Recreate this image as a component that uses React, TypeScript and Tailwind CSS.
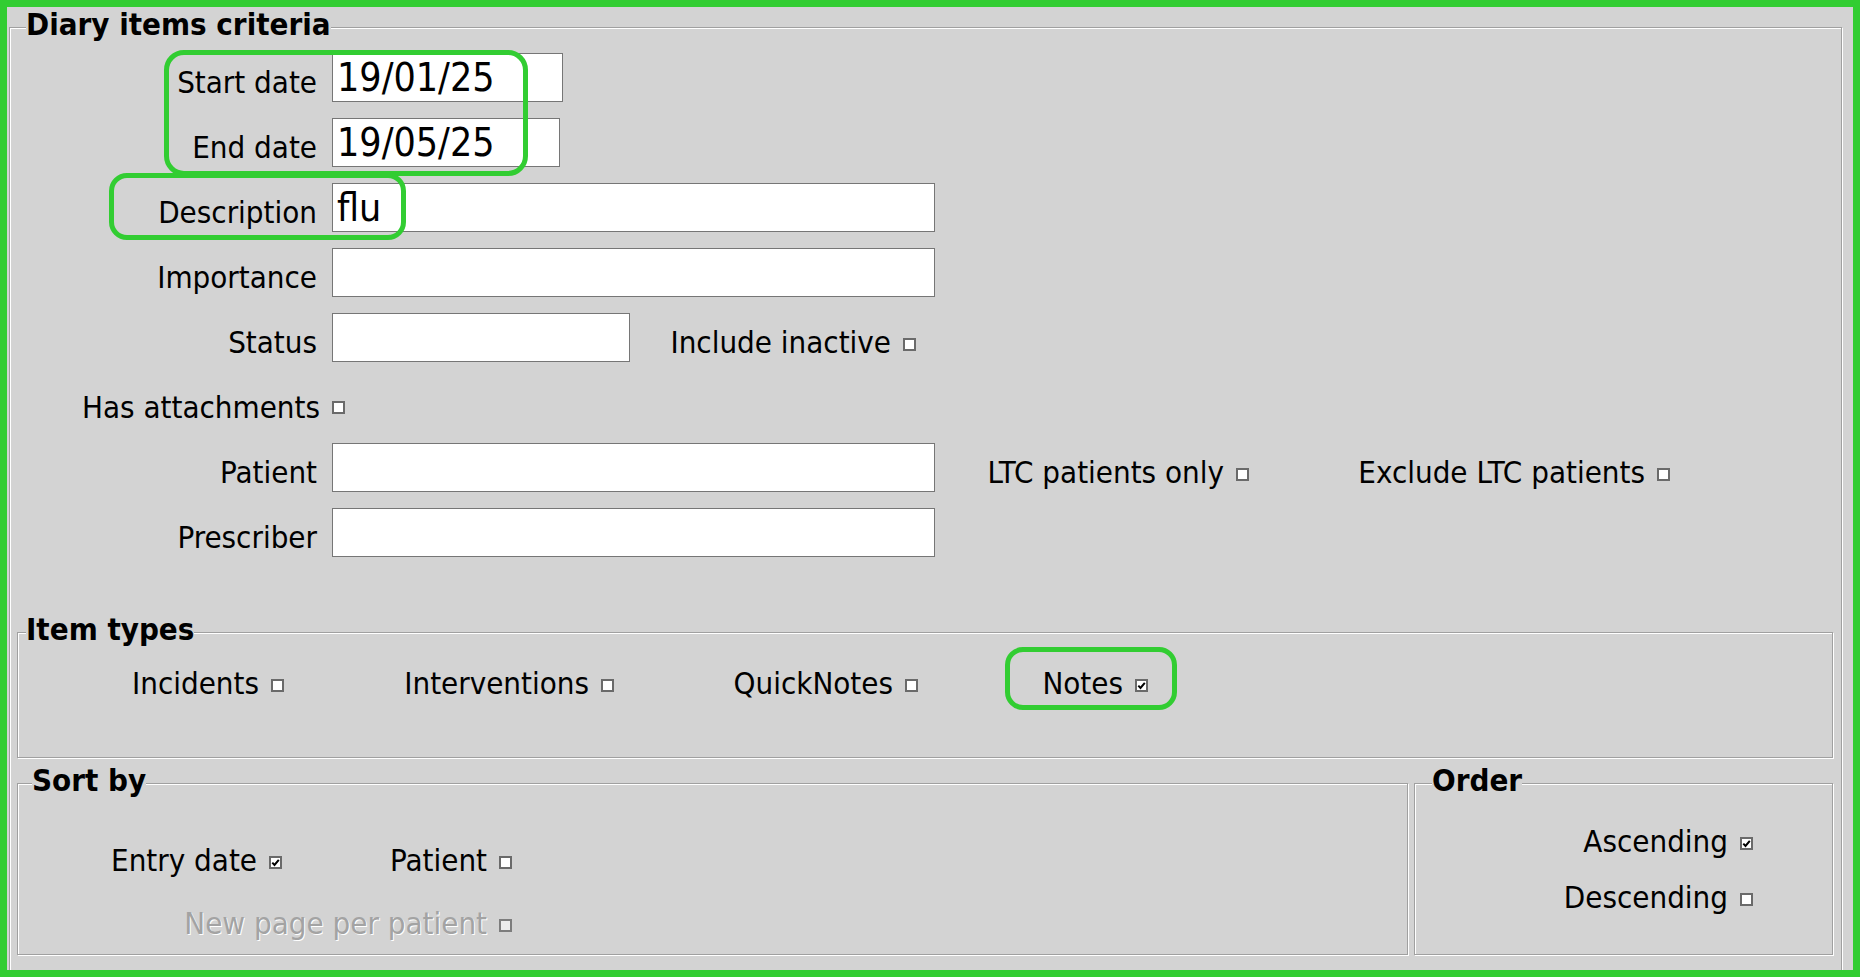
import React from 'react';

function Box({ checked = false, disabled = false, className = '' }: { checked?: boolean; disabled?: boolean; className?: string }) {
  return (
    <span
      className={`flex h-[13px] w-[13px] shrink-0 items-center justify-center border-2 ${
        disabled ? 'border-[#7d7d7d] bg-[#ebebeb]' : 'border-[#6a6a6a] bg-white'
      } ${className}`}
    >
      {checked && (
        <svg viewBox="0 0 9 9" className="h-[9px] w-[9px]">
          <path d="M1.3 4.6 L3.5 6.9 L7.8 1.8" fill="none" stroke="#000" strokeWidth="2" />
        </svg>
      )}
    </span>
  );
}

function Check({ label, checked = false, disabled = false, className = '' }: { label: string; checked?: boolean; disabled?: boolean; className?: string }) {
  return (
    <div className={`flex shrink-0 items-center justify-end gap-[12px] ${className}`}>
      <span className={`text-[31px] leading-[36px] whitespace-nowrap ${disabled ? 'text-[#a3a3a3] [text-shadow:1px_1px_0_#fff]' : ''}`}>
        {label}
      </span>
      <Box checked={checked} disabled={disabled} className="mt-[4px]" />
    </div>
  );
}

function Field({ label, value = '', w, children }: { label: string; value?: string; w: string; children?: React.ReactNode }) {
  return (
    <div className="flex h-[49px] items-end">
      <span className="w-[300px] shrink-0 pb-[4px] text-right text-[31px] leading-none">{label}</span>
      <div className={`ml-[15px] h-[49px] shrink-0 border border-[#767676] bg-white pl-[4px] text-[39px] leading-[47px] ${w}`}>{value}</div>
      {children}
    </div>
  );
}

function Legend({ text, className }: { text: string; className: string }) {
  return (
    <legend className={`bg-[#d3d3d3] px-0 text-[31px] font-bold leading-[36px] ${className}`}>
      <span className="relative -top-[3px]">{text}</span>
    </legend>
  );
}

const group = 'border border-[#a0a0a0] shadow-[inset_1px_1px_0_#fff,1px_1px_0_#fff]';

export default function App() {
  return (
    <div className="relative h-[977px] w-[1860px] overflow-hidden border-[7px] border-[#32cd32] bg-[#d3d3d3] font-[family-name:'DejaVu_Sans_Condensed','Liberation_Sans',sans-serif] text-black">
      <fieldset className={`mt-[2px] ml-[2px] mr-[11px] h-[980px] border-b-0 pl-[7px] pr-[8px] pt-[8px] ${group}`}>
        <Legend text="Diary items criteria" className="ml-[9px]" />

        <div className="flex flex-col gap-[16px]">
          <Field label="Start date" value="19/01/25" w="w-[231px]" />
          <Field label="End date" value="19/05/25" w="w-[228px]" />
          <Field label="Description" value="flu" w="w-[603px]" />
          <Field label="Importance" w="w-[603px]" />
          <Field label="Status" w="w-[298px]">
            <Check label="Include inactive" className="mb-[2px] w-[286px]" />
          </Field>
          <div className="flex h-[49px] items-end">
            <span className="w-[303px] shrink-0 pb-[4px] text-right text-[31px] leading-none">Has attachments</span>
            <Box className="mb-[13px] ml-[12px]" />
          </div>
          <Field label="Patient" w="w-[603px]">
            <Check label="LTC patients only" className="mb-[2px] w-[314px]" />
            <Check label="Exclude LTC patients" className="mb-[2px] w-[421px]" />
          </Field>
          <Field label="Prescriber" w="w-[603px]" />
        </div>

        <fieldset className={`mt-[57px] h-[144px] ${group}`}>
          <Legend text="Item types" className="ml-[8px]" />
          <div className="flex pt-[15px]">
            <Check label="Incidents" className="w-[266px]" />
            <Check label="Interventions" className="w-[330px]" />
            <Check label="QuickNotes" className="w-[304px]" />
            <Check label="Notes" checked className="w-[230px]" />
          </div>
        </fieldset>

        <div className="mt-[7px] flex gap-[6px]">
          <fieldset className={`h-[190px] w-[1391px] shrink-0 ${group}`}>
            <Legend text="Sort by" className="ml-[14px]" />
            <div className="flex pt-[41px]">
              <Check label="Entry date" checked className="w-[264px]" />
              <Check label="Patient" className="w-[230px]" />
            </div>
            <div className="mt-[27px] flex">
              <Check label="New page per patient" disabled className="w-[494px]" />
            </div>
          </fieldset>
          <fieldset className={`h-[190px] min-w-0 flex-1 ${group}`}>
            <Legend text="Order" className="ml-[17px]" />
            <div className="flex pt-[22px]">
              <Check label="Ascending" checked className="w-[338px]" />
            </div>
            <div className="mt-[20px] flex">
              <Check label="Descending" className="w-[338px]" />
            </div>
          </fieldset>
        </div>
      </fieldset>

      {/* highlight marks drawn over the form */}
      <div className="pointer-events-none absolute left-[157px] top-[43px] h-[126px] w-[364px] rounded-[20px] border-[5px] border-[#32cd32]" />
      <div className="pointer-events-none absolute left-[102px] top-[166px] h-[67px] w-[297px] rounded-[18px] border-[5px] border-[#32cd32]" />
      <div className="pointer-events-none absolute left-[998px] top-[640px] h-[63px] w-[172px] rounded-[18px] border-[5px] border-[#32cd32]" />
    </div>
  );
}
